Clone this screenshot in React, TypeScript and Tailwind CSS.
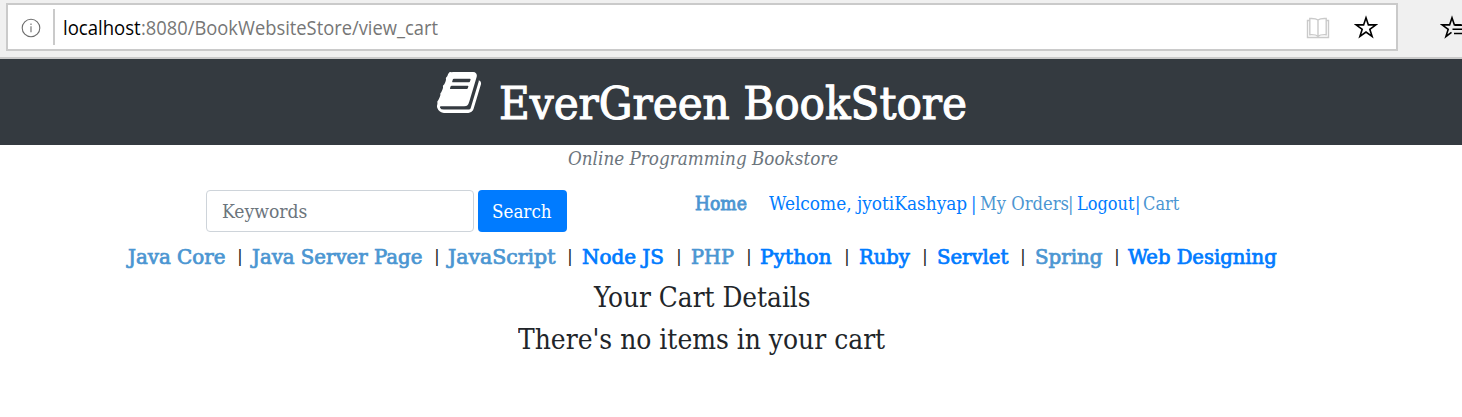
import { useLayoutEffect, useRef, useState } from "react";

/** Text condensed or stretched horizontally so that it fills its box. */
function Fit({ text, className = "" }: { text: string; className?: string }) {
  const ref = useRef<HTMLSpanElement>(null);
  const [scale, setScale] = useState(1);
  useLayoutEffect(() => {
    const el = ref.current;
    if (el && el.parentElement) setScale(el.parentElement.clientWidth / el.offsetWidth);
  }, [text]);
  return (
    <span className={`block shrink-0 whitespace-nowrap ${className}`}>
      <span ref={ref} className="inline-block origin-left" style={{ transform: `scaleX(${scale})` }}>
        {text}
      </span>
    </span>
  );
}

const categories = [
  { name: "Java Core", cls: "w-[97px] text-[#4b96d2]" },
  { name: "Java Server Page", cls: "w-[170px] text-[#4b96d2]" },
  { name: "JavaScript", cls: "w-[107px] text-[#4b96d2]" },
  { name: "Node JS", cls: "w-[82px] text-[#007bff]" },
  { name: "PHP", cls: "w-[43px] text-[#4b96d2]" },
  { name: "Python", cls: "w-[72px] text-[#007bff]" },
  { name: "Ruby", cls: "w-[51px] text-[#007bff]" },
  { name: "Servlet", cls: "w-[71px] text-[#007bff]" },
  { name: "Spring", cls: "w-[67px] text-[#4b96d2]" },
  { name: "Web Designing", cls: "w-[149px] text-[#007bff]" },
];

function AddressBar() {
  return (
    <div className="flex h-[59px] items-start overflow-hidden border-b-2 border-[#cacaca] bg-[#f0f0f0] pl-[6px] pt-[3px]">
      <div className="flex h-12 w-[1392px] shrink-0 items-center border-2 border-[#cacaca] bg-white">
        <svg className="ml-[13px] mt-px h-5 w-5 shrink-0" viewBox="0 0 20 20" fill="none" stroke="#6d6d6d" strokeWidth="1.1">
          <circle cx="10" cy="10" r="8.8" />
          <path d="M10 8.3v6M10 5.4v1.5" />
        </svg>
        <div className="ml-3 h-9 w-[2px] shrink-0 bg-[#cacaca]" />
        <div className="ml-2 flex pt-[2px] font-['Open_Sans',sans-serif] text-[19.5px] leading-7">
          <Fit text="localhost" className="w-[78px] text-black" />
          <Fit text=":8080/BookWebsiteStore/view_cart" className="w-[297px] text-[#767676]" />
        </div>
        <svg className="ml-auto mt-[2px] h-6 w-6 shrink-0" viewBox="0 0 24 24" fill="none" stroke="#cacaca" strokeWidth="1.4">
          <path d="M3.500 4.500H1.500v17h21v-17h-2M12 4v17.500M12 4c-2-1.600-5-1.700-8.200-1.500v16.200c3.200-.2 6.200-.2 8.200 1.600 2-1.800 5-1.800 8.200-1.600V2.500C17 2.300 14 2.400 12 4" />
        </svg>
        <svg className="ml-6 mr-[18px] h-6 w-6 shrink-0" viewBox="0 0 24 24" fill="none" stroke="#000" strokeWidth="1.6">
          <path d="M12 2.800l2.400 7.100h7.500l-6.100 4.400 2.300 7.200-6.100-4.500-6.100 4.500 2.300-7.200-6.100-4.400h7.500z" />
        </svg>
      </div>
      <svg className="ml-[42px] mt-3 h-6 w-6 shrink-0" viewBox="0 0 24 24" fill="none" stroke="#000" strokeWidth="1.6">
        <path d="M21.500 9.900h-7.100L12 2.800 9.600 9.900H2.100l6.100 4.400-2.300 7.200 5.600-4.200M15 10.200H24M12.500 14.300H24M14 18.500h10" />
      </svg>
    </div>
  );
}

function BookIcon() {
  return (
    <svg className="h-[41px] w-[44px] shrink-0" viewBox="0 128 1664 1536" preserveAspectRatio="none" fill="#fff">
      <path d="M1639 478q40 57 18 129l-275 906q-19 64-76.5 107.500T1183 1664H260q-77 0-148.500-53.500T12 1479q-24-67-2-127 0-4 3-27t4-37q1-8-3-21.500t-3-19.500q2-11 8-21t16.500-23.500T52 1179q23-38 45-91.500t30-91.500q3-10 .5-30t-.5-28q3-11 17-28t17-23q21-36 42-92t25-90q1-9-2.500-32t.5-28q4-13 22-30.500t22-22.500q19-26 42.500-84.500T340 411q1-8-3-25.500t-2-26.500q2-8 9-18t18-23 17-21q8-12 16.500-30.500t15-35 16-36 19.500-32 26.500-23.500 36-11.500T556 134l-1 3q38-9 51-9h761q74 0 114 56t18 130l-274 906q-36 119-71.500 153.500T1025 1408H156q-27 0-38 15-11 16-1 43 24 70 144 70h923q29 0 56-15.500t35-41.500l300-987q7-22 5-57 38 15 59 43zM575 480q-4 13 2 22.500t20 9.500h608q13 0 25.500-9.500T1247 480l21-64q4-13-2-22.500t-20-9.500H638q-13 0-25.500 9.500T596 416zM492 736q-4 13 2 22.500t20 9.500h608q13 0 25.500-9.500T1164 736l21-64q4-13-2-22.500t-20-9.500H555q-13 0-25.500 9.500T513 672z" />
    </svg>
  );
}

export default function App() {
  return (
    <div className="h-[417px] w-[1462px] overflow-hidden bg-white font-['DejaVu_Serif_Condensed','DejaVu_Serif',serif] text-[18px] text-[#212529]">
      <AddressBar />
      <header className="flex h-[86px] items-start bg-[#343a40] pl-[437px] pt-[13px] text-white">
        <BookIcon />
        <Fit
          text="EverGreen BookStore"
          className="ml-[18px] mt-[2px] w-[468px] text-[44px] leading-[60px] [-webkit-text-stroke:1px_white]"
        />
      </header>
      <div className="flex h-[45px] pl-[568px] text-[#6c757d]">
        <Fit text="Online Programming Bookstore" className="w-[270px] italic leading-7" />
      </div>
      <div className="flex h-[42px] pl-[206px]">
        <div className="flex h-[42px] w-[268px] items-center rounded-[4px] border border-[#ced4da] pl-[15px] text-[#6c757d]">
          <Fit text="Keywords" className="w-[85px]" />
        </div>
        <button className="ml-1 flex h-[42px] w-[89px] items-center rounded-[4px] bg-[#007bff] pl-[14px] text-white">
          <Fit text="Search" className="w-[60px] text-left" />
        </button>
        <nav className="ml-[128px] flex leading-7 text-[#007bff]">
          <Fit text="Home" className="w-[52px] text-[#4b96d2] [-webkit-text-stroke:0.8px_#4b96d2]" />
          <Fit text="Welcome, jyotiKashyap" className="ml-[22px] w-[198px]" />
          <Fit text="|" className="ml-[4px] w-[5px]" />
          <Fit text="My Orders" className="ml-[4px] w-[89px] text-[#4b96d2]" />
          <Fit text="|" className="-ml-[1px] w-[5px] text-[#4b96d2]" />
          <Fit text="Logout" className="ml-[4px] w-[58px]" />
          <Fit text="|" className="w-[5px]" />
          <Fit text="Cart" className="ml-[3px] w-[36px] text-[#4b96d2]" />
        </nav>
      </div>
      <nav className="flex h-[50px] pl-[128px] pt-[11px] leading-7">
        {categories.map((c, i) => (
          <div key={c.name} className="flex">
            {i > 0 && <Fit text="|" className="ml-[12px] mr-[9px] w-[5.700px] text-[16px]" />}
            <Fit text={c.name} className={`text-[20px] [-webkit-text-stroke:0.7px_currentColor] ${c.cls}`} />
          </div>
        ))}
      </nav>
      <main className="flex flex-col pt-px text-[27.400px] leading-[30px]">
        <div className="flex pl-[594px]">
          <Fit text="Your Cart Details" className="w-[217px]" />
        </div>
        <div className="mt-[12px] flex pl-[518px]">
          <Fit text="There's no items in your cart" className="w-[367px]" />
        </div>
      </main>
    </div>
  );
}
